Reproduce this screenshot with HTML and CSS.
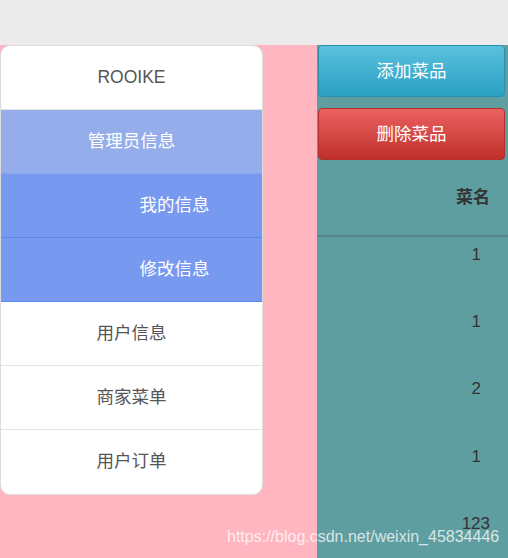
FILE: index.html
```html
<!DOCTYPE html>
<html>
<head>
<meta charset="utf-8">
<link rel="stylesheet" href="styles.css">
</head>
<body>
<div class="topbar"></div>
<div class="main">
  <div class="sidebar-wrap">
    <ul class="menu">
      <li class="item">ROOIKE</li>
      <li class="item active">管理员信息</li>
      <li class="item sub">我的信息</li>
      <li class="item sub">修改信息</li>
      <li class="item">用户信息</li>
      <li class="item">商家菜单</li>
      <li class="item last">用户订单</li>
    </ul>
  </div>
  <div class="content">
    <button class="btn btn-info">添加菜品</button>
    <button class="btn btn-danger">删除菜品</button>
    <table class="table">
      <thead><tr><th>菜名</th></tr></thead>
      <tbody>
        <tr><td>1</td></tr>
        <tr><td>1</td></tr>
        <tr><td>2</td></tr>
        <tr><td>1</td></tr>
        <tr><td class="wide">123</td></tr>
      </tbody>
    </table>
  </div>
</div>
<div class="watermark">https://blog.csdn.net/weixin_45834446</div>
</body>
</html>
```
FILE: styles.css
```css
html, body {
  margin: 0;
  padding: 0;
  height: 100%;
  overflow: hidden;
}
body {
  font-family: "Liberation Sans", "Noto Sans CJK SC", sans-serif;
  font-size: 17px;
  background: #ffb6c1;
  position: relative;
}
.topbar {
  height: 45px;
  background: #ebebeb;
}
.main {
  display: flex;
  height: 513px;
  background: #ffb6c1;
}
.sidebar-wrap {
  width: 263px;
  flex: none;
}
.menu {
  list-style: none;
  margin: 0;
  padding: 0;
  border: 1px solid #dcdcdc;
  border-radius: 10px;
  background: #fff;
  overflow: hidden;
}
.item {
  height: 63px;
  line-height: 63px;
  text-align: center;
  color: #555;
  font-size: 17.5px;
  border-bottom: 1px solid #e3e3e3;
}
.item.last {
  border-bottom: none;
  height: 64px;
}
.item.active {
  background: #95aeeb;
  color: #fff;
  border-bottom-color: #8aa6ea;
}
.item.sub {
  background: #7799f0;
  color: #fff;
  padding-left: 86px;
  border-bottom-color: #5a86ee;
}
.content {
  margin-left: 54px;
  width: 191px;
  background: #5f9ea0;
  display: flex;
  flex-direction: column;
  overflow: hidden;
}
.btn {
  display: block;
  flex: none;
  margin: 0 3px 0 1px;
  height: 52px;
  padding: 0 0 3px;
  border-radius: 4px;
  font-family: "Liberation Sans", "Noto Sans CJK SC", sans-serif;
  font-size: 17.5px;
  color: #fff;
  cursor: pointer;
}
.btn-info {
  background: linear-gradient(#5bc0de, #2aa0c2);
  border: 1px solid #2890b0;
}
.btn-danger {
  margin-top: 11px;
  background: linear-gradient(#ea6160, #c0302b);
  border: 1px solid #b3302c;
}
.table {
  flex: none;
  border-collapse: collapse;
  width: 100%;
  color: #333;
}
.table th {
  height: 71px;
  border-bottom: 2px solid #53898b;
  font-weight: bold;
  text-align: right;
  padding: 0 18px 4px 0;
  vertical-align: middle;
}
.table td {
  height: 67.5px;
  padding: 8px 27px 0 0;
  text-align: right;
  vertical-align: top;
  line-height: 20px;
  box-sizing: border-box;
}
.table td.wide {
  padding-right: 18px;
}
.watermark {
  position: absolute;
  left: 227px;
  top: 528px;
  font-size: 16px;
  color: rgba(255, 255, 255, 0.75);
  white-space: nowrap;
}
```
